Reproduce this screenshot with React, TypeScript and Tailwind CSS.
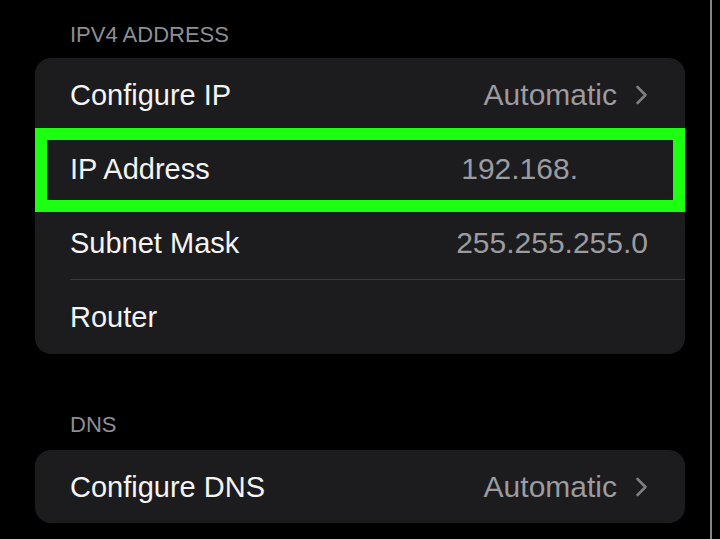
import React from 'react';

type Row = { label: string; value?: string; chevron?: boolean; valueClass?: string };

const ipv4Rows: Row[] = [
  { label: 'Configure IP', value: 'Automatic', chevron: true },
  { label: 'IP Address', value: '192.168.', valueClass: 'mr-[70px]' },
  { label: 'Subnet Mask', value: '255.255.255.0' },
  { label: 'Router' },
];

function Chevron() {
  return (
    <svg width="13" height="20" viewBox="0 0 13 20" fill="none" className="ml-[18px]">
      <path d="M2.5 2 L10.5 10 L2.5 18" stroke="#7d7d82" strokeWidth="2.6" strokeLinecap="round" strokeLinejoin="round" />
    </svg>
  );
}

function SettingsRow({ row, last }: { row: Row; last: boolean }) {
  return (
    <div className="relative flex h-[74px] items-center justify-between pl-[35px] pr-[37px]">
      <span className="text-[29px] leading-[30px] text-[#f4f4f4]">{row.label}</span>
      {row.value && (
        <div className="flex items-center">
          <span className={'text-[30px] leading-[30px] text-[#9b9ba0] ' + (row.valueClass ?? '')}>{row.value}</span>
          {row.chevron && <Chevron />}
        </div>
      )}
      {!last && <div className="absolute bottom-0 left-[35px] right-0 h-px bg-[#38383b]" />}
    </div>
  );
}

export default function App() {
  return (
    <div className="flex h-[539px] w-[720px] overflow-hidden bg-black font-['Liberation_Sans',Arial,sans-serif]">
      <div className="w-[710px] pl-[35px] pr-[25px] pt-[23px]">
        {/* IPv4 section */}
        <div className="pl-[35px] text-[22px] leading-[24px] text-[#8e8e93]">IPV4 ADDRESS</div>
        <div className="relative mt-[11px] overflow-hidden rounded-[16px] bg-[#1c1c1e]">
          {ipv4Rows.map((row, i) => (
            <SettingsRow key={row.label} row={row} last={i === ipv4Rows.length - 1} />
          ))}
          {/* highlight box drawn over the IP Address row */}
          <div className="absolute left-0 right-0 top-[70px] h-[84px] border-[12px] border-[#1cff10]" />
        </div>

        {/* DNS section */}
        <div className="mt-[59px] pl-[35px] text-[22px] leading-[24px] text-[#8e8e93]">DNS</div>
        <div className="mt-[13px] overflow-hidden rounded-[16px] bg-[#1c1c1e]">
          <div className="flex h-[73px] items-center justify-between pl-[35px] pr-[37px]">
            <span className="text-[29px] leading-[30px] text-[#f4f4f4]">Configure DNS</span>
            <div className="flex items-center">
              <span className="text-[30px] leading-[30px] text-[#9b9ba0]">Automatic</span>
              <Chevron />
            </div>
          </div>
        </div>
      </div>
      <div className="w-[2px] bg-[#858585]" />
      <div className="flex-1 bg-black" />
    </div>
  );
}
